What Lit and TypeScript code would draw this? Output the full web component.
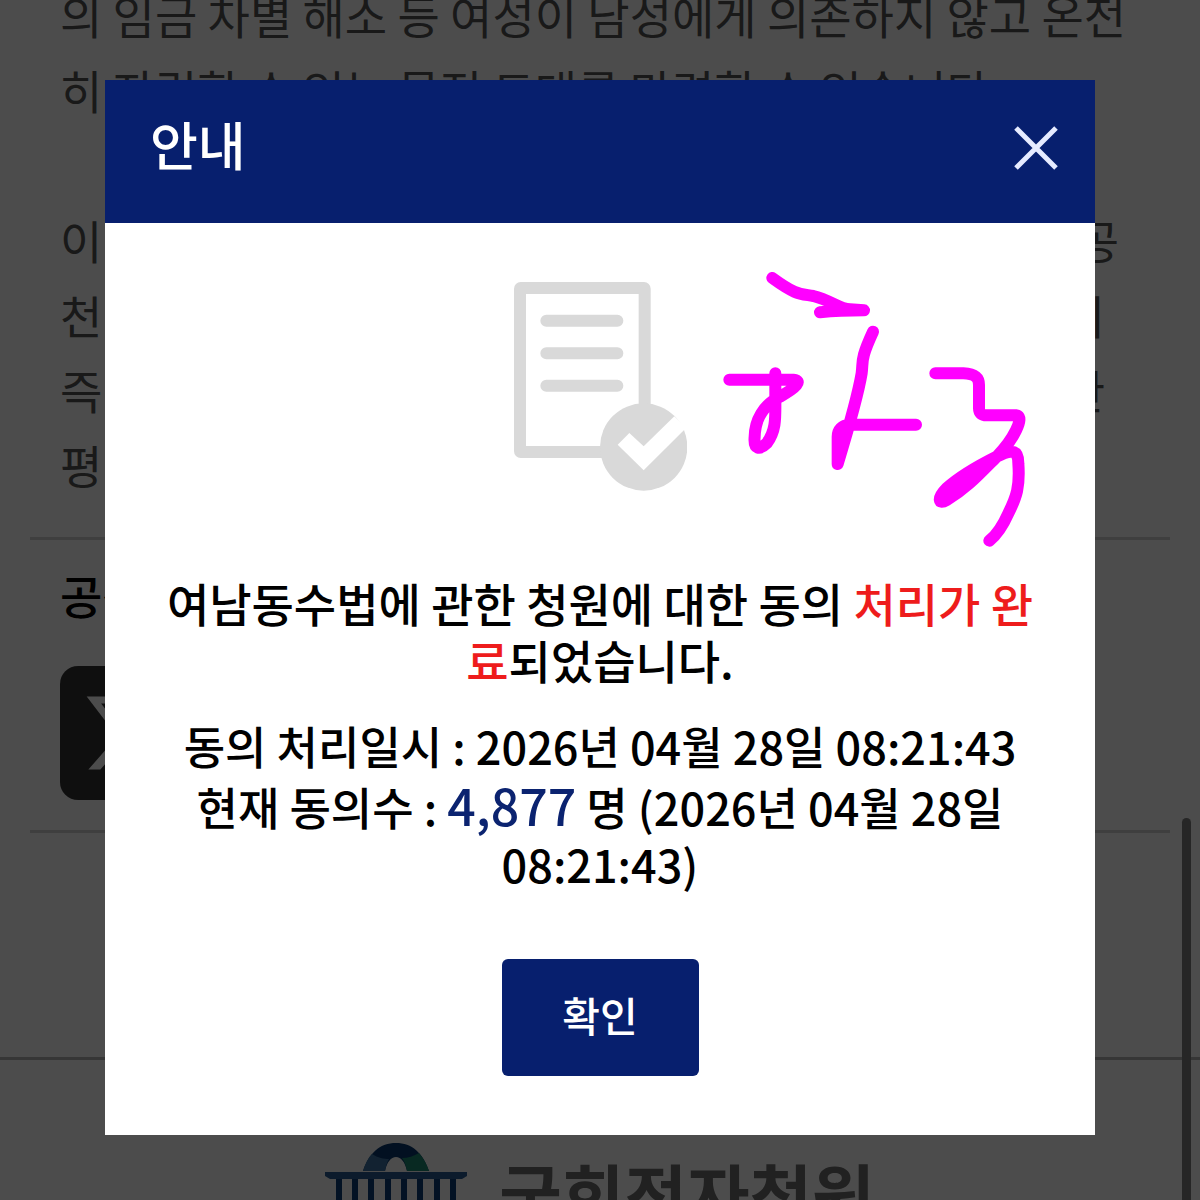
import { LitElement, html, css } from "lit";
import { customElement, property } from "lit/decorators.js";

const fontStack = css`"Noto Sans CJK KR", "Noto Sans", sans-serif`;

@customElement("petition-page")
class PetitionPage extends LitElement {
  static styles = css`
    :host {
      display: block;
      background: #fff;
      color: #555;
      font: 400 46px/75px ${fontStack};
    }
    .content {
      margin-top: -23px;
      padding: 0 60px;
    }
    p {
      margin: 0;
      word-break: break-all;
    }
    .gap {
      height: 75px;
    }
    .line {
      display: flex;
      justify-content: space-between;
      padding-right: 21px;
    }
    .line.short {
      padding-right: 35px;
    }
    .share {
      margin: 35px 30px 0;
      padding: 17px 30px 30px;
      border: solid #d2d2d2;
      border-width: 3px 0;
    }
    h2 {
      margin: 0 0 34px;
      color: #000;
      font-size: 46px;
      font-weight: 500;
      line-height: 75px;
    }
    .x-link {
      display: flex;
      align-items: center;
      justify-content: center;
      width: 134px;
      height: 134px;
      border-radius: 18px;
      background: #353535;
    }
    footer {
      display: flex;
      justify-content: center;
      gap: 32px;
      margin-top: 224px;
      padding-top: 83px;
      border-top: 3px solid #b4b4b4;
    }
    .brand {
      color: #707070;
      font-size: 68px;
      font-weight: 700;
      line-height: 100px;
    }
  `;

  render() {
    return html`
      <div class="content">
        <p>의 임금 차별 해소 등 여성이 남성에게 의존하지 않고 온전히 자립할 수 있는 물적 토대를 마련할 수 있습니다.</p>
        <div class="gap"></div>
        <div class="line"><span>이</span><span>공</span></div>
        <div class="line short"><span>천</span><span>이</span></div>
        <div class="line short"><span>즉</span><span>한</span></div>
        <div class="line"><span>평</span></div>
      </div>
      <section class="share">
        <h2>공감</h2>
        <a class="x-link" href="#" aria-label="X">
          <svg width="90" height="90" viewBox="0 0 24 24" fill="#fff">
            <path
              d="M18.2 2.25h3.3l-7.2 8.25 8.5 11.25h-6.7l-5.2-6.8-6 6.8H1.7l7.7-8.8L1.25 2.25h6.8l4.7 6.2zm-1.1 17.5h1.8L7.1 4.1h-2z"
            />
          </svg>
        </a>
      </section>
      <footer>
        <svg width="142" height="96" viewBox="0 0 142 96">
          <path d="M38 28C44 10 55 0 71 0s27 10 33 28H82c-2-9-6-14-11-14s-9 5-11 14z" fill="#08386e" />
          <path d="M38 28c2-7 5-13 9-17 6 4 12 5 17 5-2 3-3 7-4 12z" fill="#3c74a4" />
          <path d="M82 28c-1-5-2-9-5-13 6 0 12-2 17-5 4 5 8 11 10 18z" fill="#1b8b72" />
          <path d="M0 29h142v4l-5 3H5l-5-3z" fill="#2a5c93" />
          <path d="M14 36v60M30 36v60M46 36v60M63 36v60M79 36v60M95 36v60M112 36v60M128 36v60" stroke="#0b3f78" stroke-width="6" />
        </svg>
        <span class="brand">국회전자청원</span>
      </footer>
    `;
  }
}

@customElement("notice-dialog")
class NoticeDialog extends LitElement {
  @property() agreedAt = "";
  @property() count = "";

  static styles = css`
    :host {
      display: block;
      position: relative;
      background: #fff;
      color: #000;
      font: 500 46px/57px ${fontStack};
    }
    header {
      display: flex;
      align-items: center;
      justify-content: space-between;
      height: 143px;
      box-sizing: border-box;
      padding: 0 37px 8px 45px;
      background: #071f6e;
      color: #fff;
    }
    h1 {
      margin: 0;
      padding-bottom: 8px;
      font-size: 52px;
      font-weight: 500;
      line-height: 72px;
    }
    button {
      border: 0;
      color: #fff;
      font-family: inherit;
      font-weight: 500;
      cursor: pointer;
    }
    .close {
      display: flex;
      padding: 0;
      background: none;
    }
    .body {
      display: flex;
      flex-direction: column;
      align-items: center;
      padding: 59px 60px;
      text-align: center;
    }
    .icon {
      margin-bottom: 83px;
    }
    p {
      margin: 0 0 29px;
      word-break: break-all;
    }
    .detail {
      margin-bottom: 67px;
      font-size: 45px;
      word-break: keep-all;
    }
    em {
      color: #ee1c1c;
      font-style: normal;
    }
    strong {
      color: #0b2370;
      font-size: 50px;
      font-weight: 500;
      line-height: 60px;
    }
    .ok {
      width: 197px;
      height: 117px;
      padding: 0 0 8px;
      border-radius: 6px;
      background: #071f6e;
      font-size: 41px;
    }
    .scribble {
      position: absolute;
      top: 170px;
      right: 45px;
      pointer-events: none;
    }
  `;

  render() {
    return html`
      <header>
        <h1>안내</h1>
        <button class="close" aria-label="닫기">
          <svg width="44" height="44" viewBox="0 0 44 44" stroke="#e6ebff" stroke-width="5">
            <path d="M2 2l40 40M42 2L2 42" />
          </svg>
        </button>
      </header>
      <div class="body">
        <svg class="icon" width="173" height="209" viewBox="101 67 519 627">
          <rect x="119" y="85" width="374" height="492" rx="2" fill="none" stroke="#d9d9d9" stroke-width="36" />
          <path d="M198 183h213M198 281h213M198 378h213" stroke="#d9d9d9" stroke-width="36" stroke-linecap="round" />
          <circle cx="490" cy="562" r="131" fill="#d9d9d9" />
          <path d="M412 555l35-35 43 40 92-90 36 34-128 128z" fill="#fff" />
        </svg>
        <p>여남동수법에 관한 청원에 대한 동의 <em>처리가 완료</em>되었습니다.</p>
        <p class="detail">
          동의 처리일시 : ${this.agreedAt}<br />
          현재 동의수 : <strong>${this.count}</strong> 명 (${this.agreedAt})
        </p>
        <button class="ok">확인</button>
      </div>
      <svg
        class="scribble"
        width="350"
        height="310"
        viewBox="0 0 1050 930"
        fill="none"
        stroke="#f0f"
        stroke-width="36"
        stroke-linecap="round"
        stroke-linejoin="round"
      >
        <path d="M217 84C290 137 300 131 340 138C390 150 420 177 450 178L492 181C430 181 400 183 360 187" />
        <path
          d="M88 389H280C308 392 290 412 240 440C190 465 165 510 164 560C160 600 180 600 200 580C230 540 226 500 226 440V370"
        />
        <path d="M519 245C480 330 490 330 485 370C475 430 450 520 413 642V560C413 540 425 525 450 524H648" />
        <path
          d="M706 370H790C830 372 837 385 837 405V475C837 490 845 496 860 496H950C975 500 940 570 890 620C840 670 800 715 740 750C715 765 710 745 740 715C790 670 850 640 890 620C930 600 955 595 955 640C960 710 950 740 925 790C905 835 890 855 868 872"
        />
        <path d="M745 735C790 690 840 660 880 630" />
      </svg>
    `;
  }
}

@customElement("app-root")
class AppRoot extends LitElement {
  static styles = css`
    :host {
      display: block;
      position: relative;
      height: 100vh;
      overflow: hidden;
    }
    .backdrop {
      position: absolute;
      inset: 0;
      padding: 80px 105px;
      background: rgba(0, 0, 0, 0.7);
    }
    .scrollbar {
      position: absolute;
      top: 818px;
      right: 9px;
      bottom: -9px;
      width: 9px;
      border-radius: 5px;
      background: #262626;
    }
  `;

  render() {
    return html`
      <petition-page></petition-page>
      <div class="backdrop">
        <notice-dialog role="dialog" agreedAt="2026년 04월 28일 08:21:43" count="4,877"></notice-dialog>
      </div>
      <div class="scrollbar"></div>
    `;
  }
}
